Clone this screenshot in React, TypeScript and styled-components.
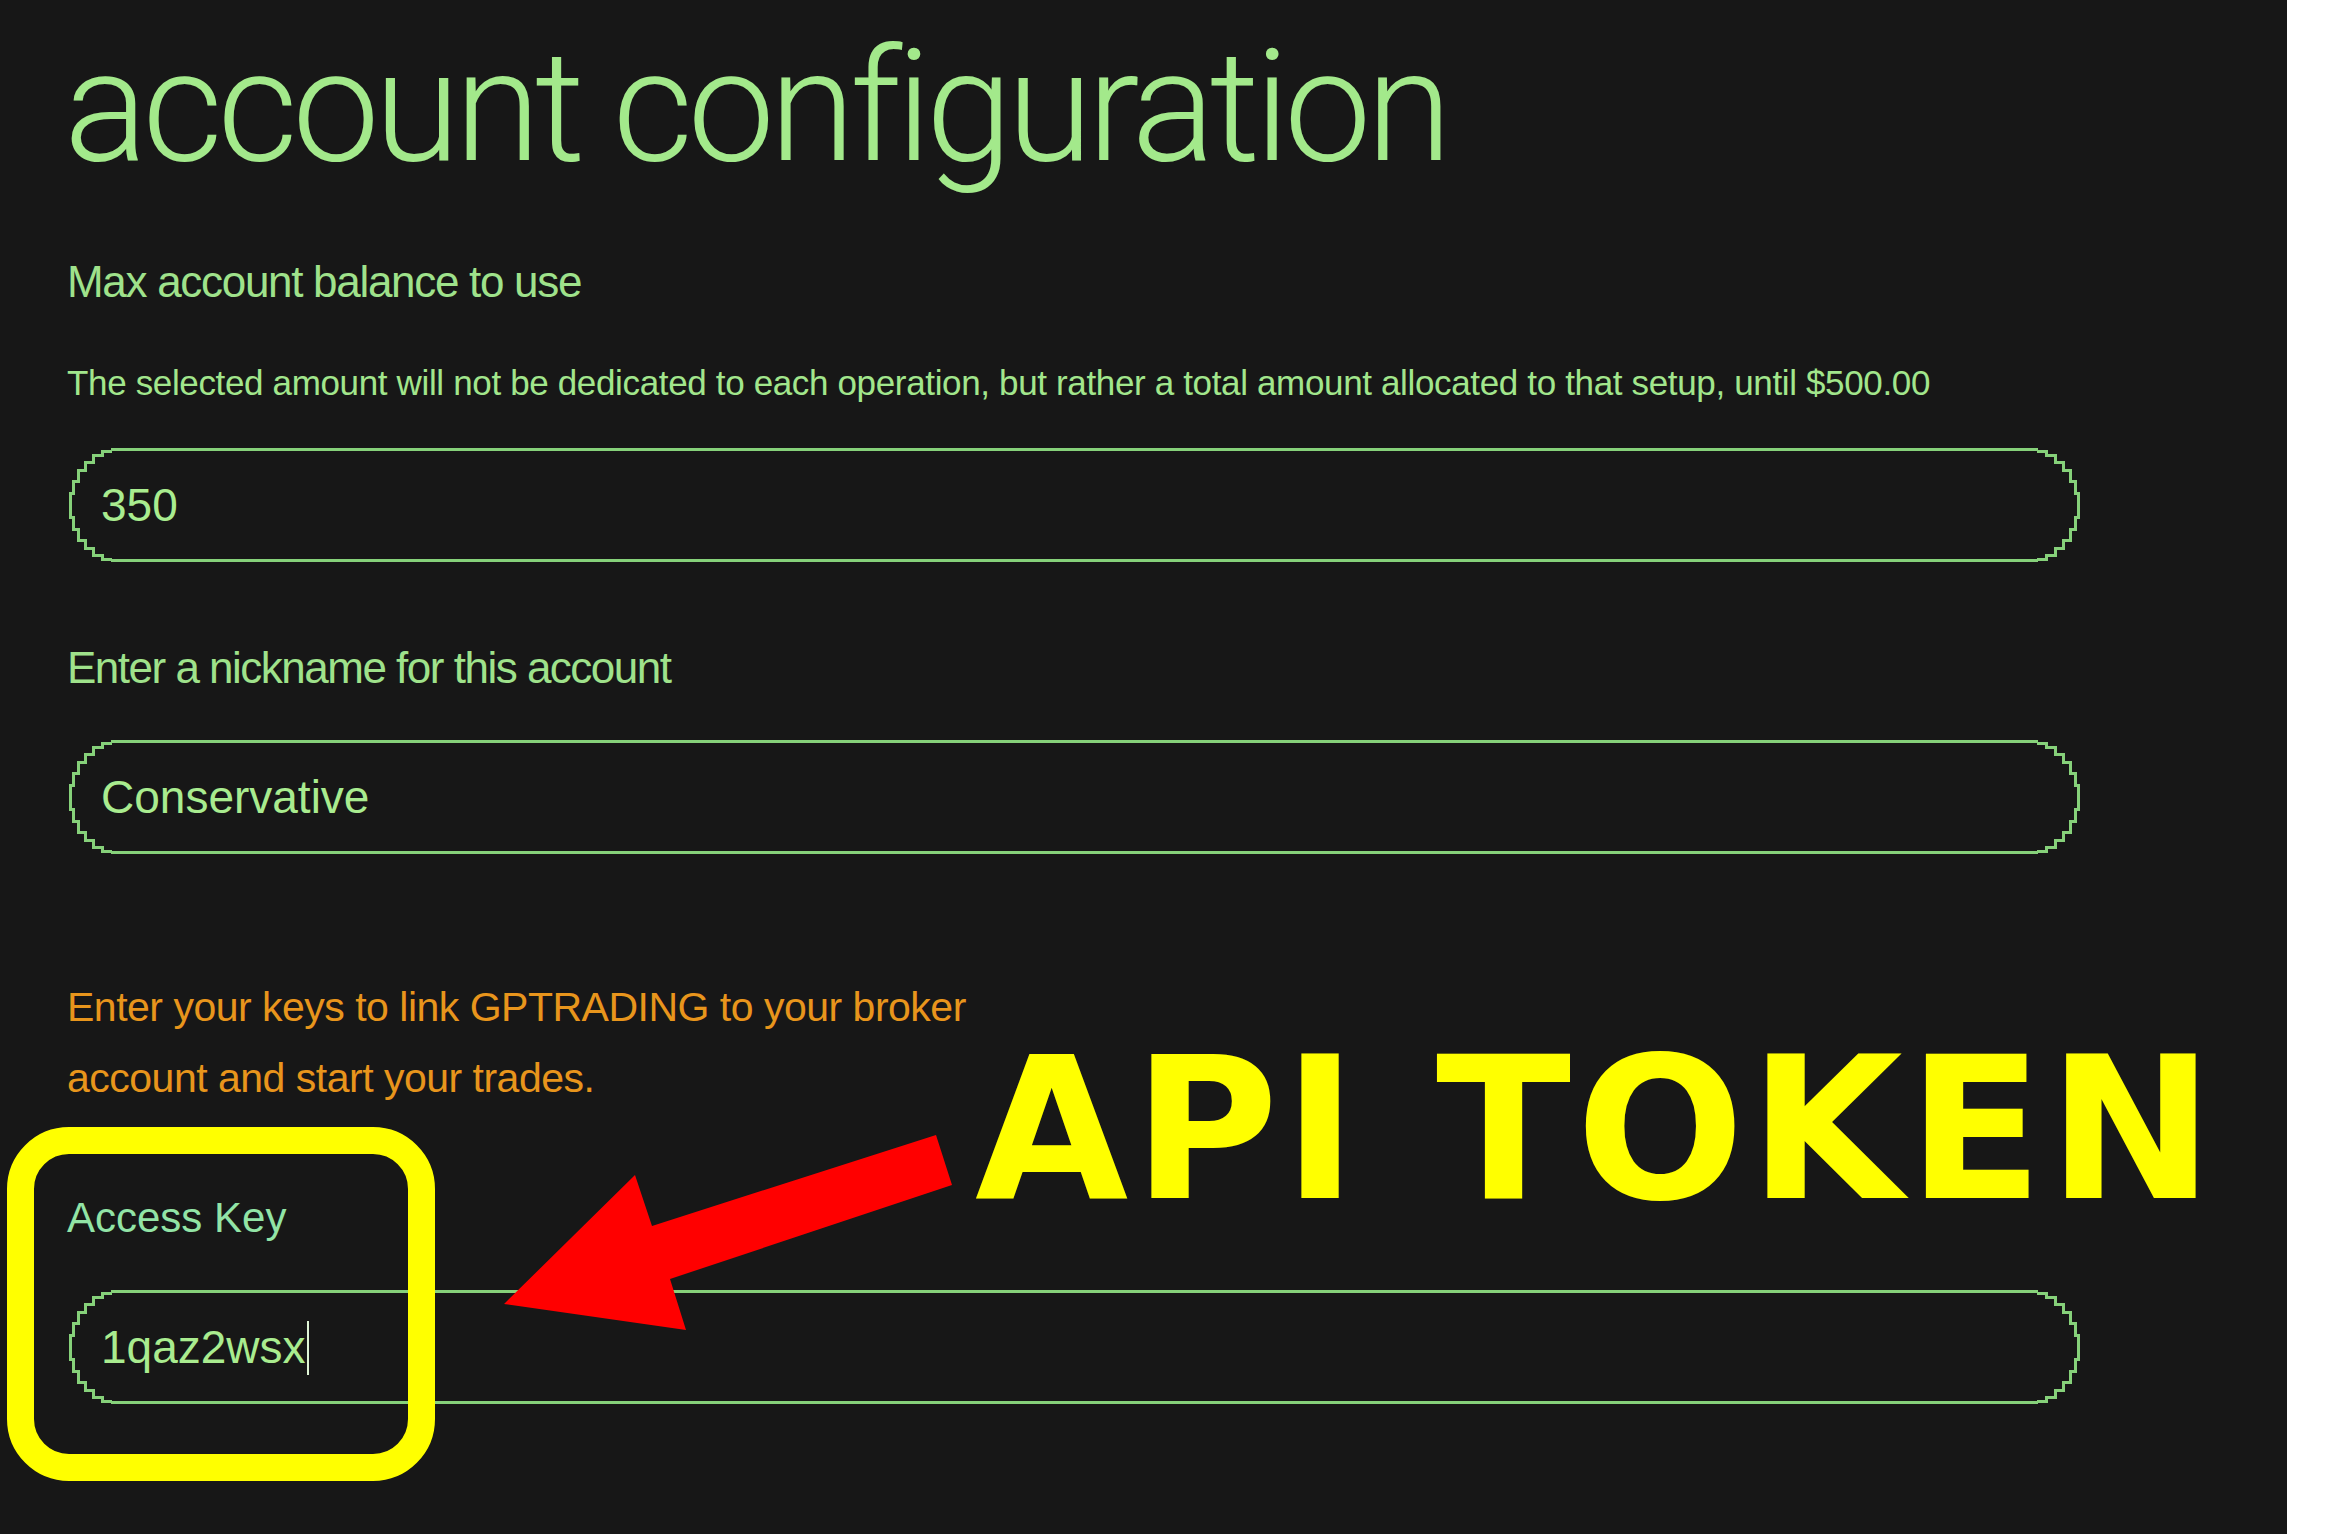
import styled, { createGlobalStyle } from "styled-components";

const GlobalStyle = createGlobalStyle`
  html, body {
    margin: 0;
    padding: 0;
    background: #ffffff;
  }
  body {
    font-family: "Liberation Sans", Arial, sans-serif;
  }
`;

const Page = styled.div`
  display: flex;
  width: 2334px;
  height: 1534px;
  overflow: hidden;
`;

const Panel = styled.main`
  position: relative;
  width: 2287px;
  height: 1534px;
  background: #171717;
  padding: 29px 0 0 67px;
  box-sizing: border-box;
  display: flex;
  flex-direction: column;
  align-items: flex-start;
`;

const Title = styled.h1`
  margin: 0 0 0 -3px;
  font-family: Roboto, "Liberation Sans", sans-serif;
  font-weight: 300;
  font-size: 156px;
  line-height: 156px;
  letter-spacing: -5.4px;
  color: #a3e98b;
  white-space: nowrap;
`;

const Label = styled.label<{ $gap: number; $tracking?: number }>`
  display: block;
  margin-top: ${(p) => p.$gap}px;
  font-size: 44px;
  line-height: 52px;
  letter-spacing: ${(p) => p.$tracking ?? -1.3}px;
  color: #9fe28b;
  white-space: nowrap;
`;

const KeyLabel = styled(Label)`
  font-size: 42px;
  line-height: 50px;
  letter-spacing: 0;
  color: #92e4a6;
`;

const Hint = styled.p`
  margin: 54px 0 0;
  font-size: 35px;
  line-height: 42px;
  letter-spacing: -0.35px;
  color: #a2e68c;
  white-space: nowrap;
`;

const Notice = styled.p`
  margin: 118px 0 0;
  width: 960px;
  font-size: 41px;
  line-height: 71px;
  letter-spacing: -0.5px;
  color: #e8951c;
`;

const Field = styled.div<{ $gap: number }>`
  display: flex;
  margin-top: ${(p) => p.$gap}px;
  width: 2015px;
  height: 114px;
`;

const Cap = styled.svg<{ $flip?: boolean }>`
  flex: none;
  display: block;
  transform: ${(p) => (p.$flip ? "scaleX(-1)" : "none")};
`;

const FieldBody = styled.div`
  flex: 1;
  display: flex;
  align-items: center;
  border-top: 3px solid #86d17a;
  border-bottom: 3px solid #86d17a;
  box-sizing: border-box;
  margin: 0 -1px;
`;

const FieldText = styled.span`
  margin-left: -10px;
  font-size: 46px;
  line-height: 54px;
  color: #a9ec8f;
  white-space: nowrap;
`;

const Caret = styled.span`
  display: inline-block;
  width: 2px;
  height: 54px;
  margin-left: 1px;
  vertical-align: -12px;
  background: #dff5d6;
`;

const Highlight = styled.div`
  position: absolute;
  left: 7px;
  top: 1127px;
  width: 428px;
  height: 354px;
  box-sizing: border-box;
  border: 27px solid #ffff00;
  border-radius: 62px;
`;

const Arrow = styled.svg`
  position: absolute;
  left: 490px;
  top: 1120px;
`;

const Callout = styled.div`
  position: absolute;
  left: 975px;
  top: 1031px;
  font-family: "DejaVu Sans", sans-serif;
  font-weight: 700;
  font-size: 198px;
  line-height: 198px;
  letter-spacing: 5px;
  color: #ffff00;
  white-space: nowrap;
`;

const CAP_W = 45;
const CAP_H = 114;

function stepPath(w: number, h: number, steps = 7): string {
  const rx = w - 1.5;
  const ry = h / 2 - 1.5;
  const cy = h / 2;
  const pts: [number, number][] = [];
  for (let i = 0; i <= steps * 2; i++) {
    const t = (Math.PI * i) / (steps * 2);
    pts.push([Math.round(w - rx * Math.sin(t)) + 0.5, Math.round(cy - ry * Math.cos(t)) + 0.5]);
  }
  let d = `M ${w} 1.5`;
  for (let i = 1; i < pts.length; i++) {
    const [x, y] = pts[i];
    d += i <= steps ? ` V ${y} H ${x}` : ` H ${x} V ${y}`;
  }
  d += ` V ${h - 1.5} H ${w}`;
  return d;
}

const capD = stepPath(CAP_W, CAP_H);

function EndCap({ flip }: { flip?: boolean }) {
  return (
    <Cap $flip={flip} width={CAP_W} height={CAP_H} viewBox={`0 0 ${CAP_W} ${CAP_H}`}>
      <path d={capD} fill="none" stroke="#86d17a" strokeWidth={3} shapeRendering="crispEdges" />
    </Cap>
  );
}

type InputProps = { value: string; gap: number; caret?: boolean };

function Input({ value, gap, caret }: InputProps) {
  return (
    <Field $gap={gap}>
      <EndCap />
      <FieldBody>
        <FieldText>
          {value}
          {caret && <Caret />}
        </FieldText>
      </FieldBody>
      <EndCap flip />
    </Field>
  );
}

export default function App() {
  return (
    <>
      <GlobalStyle />
      <Page>
        <Panel>
          <Title>account configuration</Title>
          <Label $gap={71}>Max account balance to use</Label>
          <Hint>
            The selected amount will not be dedicated to each operation, but rather a total amount allocated to
            that setup, until $500.00
          </Hint>
          <Input value="350" gap={44} />
          <Label $gap={80} $tracking={-1.5}>
            Enter a nickname for this account
          </Label>
          <Input value="Conservative" gap={46} />
          <Notice>Enter your keys to link GPTRADING to your broker account and start your trades.</Notice>
          <KeyLabel $gap={79}>Access Key</KeyLabel>
          <Input value="1qaz2wsx" gap={47} caret />

          <Highlight />
          <Arrow width={480} height={230} viewBox="490 1120 480 230">
            <polygon
              points="504,1304 635,1175 652,1226 936,1135 952,1185 670,1279 686,1330"
              fill="#ff0000"
            />
          </Arrow>
          <Callout>API TOKEN</Callout>
        </Panel>
      </Page>
    </>
  );
}
